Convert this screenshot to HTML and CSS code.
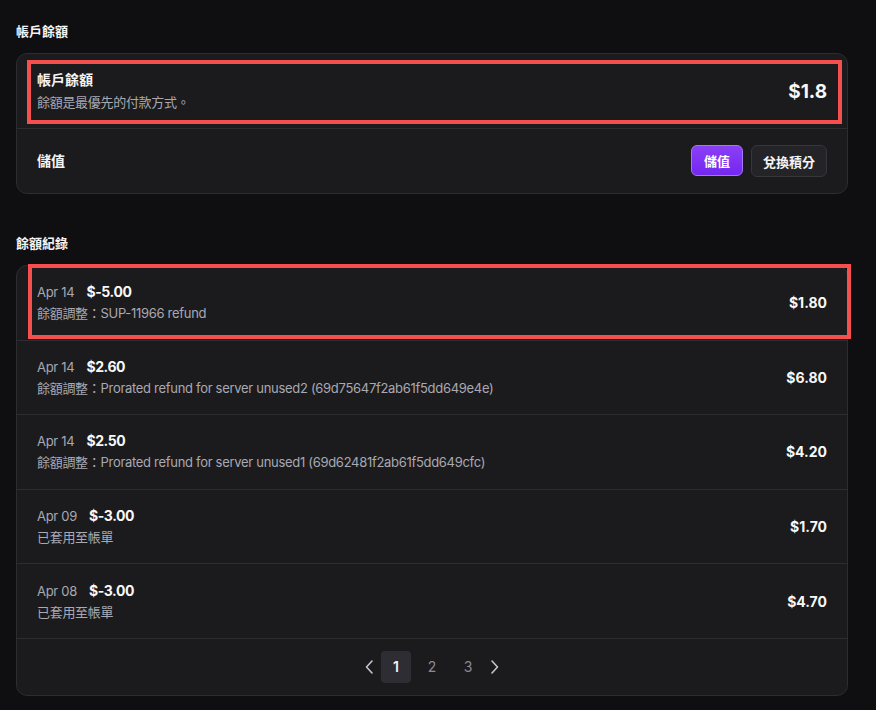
FILE: index.html
```html
<!DOCTYPE html>
<html lang="zh-Hant">
<head>
<meta charset="utf-8">
<title>帳戶餘額</title>
<link rel="stylesheet" href="styles.css">
</head>
<body>
<main class="page">
  <h2 class="section-title">帳戶餘額</h2>
  <section class="card">
    <div class="row balance-row">
      <div class="highlight hl-balance"></div>
      <div class="info">
        <div class="title">帳戶餘額</div>
        <div class="sub">餘額是最優先的付款方式。</div>
      </div>
      <div class="big-amount">$1.8</div>
    </div>
    <div class="row topup-row">
      <div class="title">儲值</div>
      <div class="actions">
        <button class="btn btn-primary">儲值</button>
        <button class="btn btn-secondary">兌換積分</button>
      </div>
    </div>
  </section>

  <h2 class="section-title second">餘額紀錄</h2>
  <section class="card">
    <div class="row record">
      <div class="highlight hl-record"></div>
      <div class="info">
        <div class="line1"><span class="date">Apr 14</span><span class="delta">$-5.00</span></div>
        <div class="sub">餘額調整：SUP-11966 refund</div>
      </div>
      <div class="amount">$1.80</div>
    </div>
    <div class="row record">
      <div class="info">
        <div class="line1"><span class="date">Apr 14</span><span class="delta">$2.60</span></div>
        <div class="sub">餘額調整：Prorated refund for server unused2 (69d75647f2ab61f5dd649e4e)</div>
      </div>
      <div class="amount">$6.80</div>
    </div>
    <div class="row record">
      <div class="info">
        <div class="line1"><span class="date">Apr 14</span><span class="delta">$2.50</span></div>
        <div class="sub">餘額調整：Prorated refund for server unused1 (69d62481f2ab61f5dd649cfc)</div>
      </div>
      <div class="amount">$4.20</div>
    </div>
    <div class="row record">
      <div class="info">
        <div class="line1"><span class="date">Apr 09</span><span class="delta">$-3.00</span></div>
        <div class="sub">已套用至帳單</div>
      </div>
      <div class="amount">$1.70</div>
    </div>
    <div class="row record">
      <div class="info">
        <div class="line1"><span class="date">Apr 08</span><span class="delta">$-3.00</span></div>
        <div class="sub">已套用至帳單</div>
      </div>
      <div class="amount">$4.70</div>
    </div>
    <nav class="pager">
      <span class="arrow"><svg width="10" height="16" viewBox="0 0 10 16"><path d="M8 2 L2.5 8 L8 14" fill="none" stroke="#c4c4cc" stroke-width="1.6" stroke-linecap="round" stroke-linejoin="round"/></svg></span>
      <span class="page-num current">1</span>
      <span class="page-num">2</span>
      <span class="page-num">3</span>
      <span class="arrow"><svg width="10" height="16" viewBox="0 0 10 16"><path d="M2 2 L7.5 8 L2 14" fill="none" stroke="#c4c4cc" stroke-width="1.6" stroke-linecap="round" stroke-linejoin="round"/></svg></span>
    </nav>
  </section>
</main>
</body>
</html>
```

FILE: styles.css
```css
* { box-sizing: border-box; }
html, body {
  margin: 0;
  background: #0f0f11;
}
body {
  font-family: Inter, "Noto Sans CJK TC", sans-serif;
  color: #f4f4f5;
}
.page {
  width: 832px;
  margin-left: 16px;
  padding-top: 21px;
}
.section-title {
  margin: 0 0 12px 0;
  font-size: 13px;
  line-height: 20px;
  font-weight: 700;
  color: #f4f4f5;
}
.section-title.second {
  margin-top: 39px;
}
.card {
  background: #1b1b1e;
  border: 1px solid #2c2c31;
  border-radius: 11px;
}
.row {
  position: relative;
  display: flex;
  align-items: center;
  justify-content: space-between;
  padding: 0 20px 0 20px;
  border-bottom: 1px solid #2c2c31;
}
.balance-row { height: 75px; }
.topup-row { height: 64px; border-bottom: none; }
.record { height: 74.6px; }
.info { display: flex; flex-direction: column; gap: 2px; }
.title {
  font-size: 14px;
  line-height: 20px;
  font-weight: 700;
  color: #f4f4f5;
  padding-bottom: 1px;
}
.sub {
  font-size: 13px;
  line-height: 19px;
  color: #a9a9b2;
  letter-spacing: -0.3px;
}
.big-amount {
  font-size: 19px;
  font-weight: 700;
  color: #f8f8f8;
  padding-top: 1px;
}
.actions { display: flex; gap: 8px; }
.btn {
  font-family: Inter, "Noto Sans CJK TC", sans-serif;
  font-size: 13px;
  font-weight: 700;
  height: 32px;
  border-radius: 6px;
  padding: 0 11px;
  cursor: pointer;
}
.btn-primary {
  background: linear-gradient(#8b3ff6, #7427f0);
  border: 1px solid #a477f7;
  color: #ffffff;
  height: 31px;
  padding: 0 12px;
}
.btn-secondary {
  background: #242428;
  border: 1px solid #36363b;
  color: #f4f4f5;
}
.line1 {
  display: flex;
  align-items: baseline;
  gap: 12px;
  line-height: 20px;
}
.date {
  font-size: 13px;
  color: #a9a9b2;
  letter-spacing: -0.3px;
}
.delta {
  font-size: 14px;
  font-weight: 700;
  color: #f8f8f8;
  letter-spacing: -0.4px;
}
.amount {
  font-size: 14px;
  font-weight: 700;
  color: #f8f8f8;
}
.highlight {
  position: absolute;
  border: 4px solid #f5504e;
  pointer-events: none;
}
.hl-balance {
  left: 10px;
  right: 5px;
  top: 6px;
  bottom: 4px;
}
.hl-record {
  left: 11px;
  right: -4px;
  top: -2px;
  bottom: 1px;
}
.pager {
  height: 56px;
  display: flex;
  align-items: center;
  justify-content: center;
  gap: 4px;
}
.arrow {
  display: flex;
  align-items: center;
  width: 14px;
  justify-content: center;
}
.page-num {
  width: 32px;
  height: 32px;
  display: flex;
  align-items: center;
  justify-content: center;
  font-size: 14px;
  color: #8a8a94;
  border-radius: 4px;
}
.page-num.current {
  width: 30px;
  margin: 0 1px;
  background: #2e2d33;
  color: #f4f4f5;
  font-weight: 600;
}
```
